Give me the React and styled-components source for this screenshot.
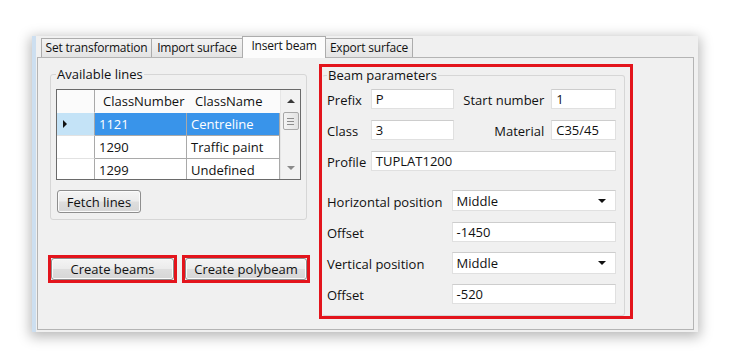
import styled, { createGlobalStyle } from "styled-components";

const GlobalStyle = createGlobalStyle`
  html, body { margin: 0; background: #ffffff; }
  body {
    font-family: "Open Sans", "Liberation Sans", sans-serif;
    font-size: 13px;
    color: #111111;
  }
`;

const Page = styled.div`
  width: 730px;
  height: 360px;
  box-sizing: border-box;
  padding: 36px 0 0 32px;
`;

const Window = styled.div`
  width: 666px;
  height: 296px;
  box-sizing: border-box;
  display: flex;
  flex-direction: column;
  padding: 0 4px 2px 1px;
  background: #f0f0f0;
  border-left: 4px solid #cddff0;
  box-shadow: 0 3px 12px 2px rgba(0, 0, 0, 0.28);
`;

const TabStrip = styled.div`
  height: 22px;
  margin-bottom: -1px;
  padding-left: 5px;
  display: flex;
  align-items: flex-end;
`;

const Tab = styled.div`
  position: relative;
  z-index: ${(p) => (p.$active ? 2 : 1)};
  box-sizing: border-box;
  width: ${(p) => p.$w}px;
  height: ${(p) => (p.$active ? 22 : 19)}px;
  margin-bottom: ${(p) => (p.$active ? 0 : 1)}px;
  margin-left: -1px;
  border: 1px solid #acacac;
  border-bottom: none;
  background: ${(p) =>
    p.$active ? "#fcfcfc" : "linear-gradient(#f3f3f3, #e4e4e4)"};
  font-size: 12px;
  line-height: ${(p) => (p.$active ? 18 : 17)}px;
  text-align: center;
  white-space: nowrap;
  letter-spacing: -0.2px;
`;

const TabPage = styled.div`
  flex: 1;
  display: flex;
  gap: 9px;
  padding: 6px 0 0 10px;
  border: 1px solid #b4b4b4;
  background: #f0f0f0;
`;

const LeftCol = styled.div`
  width: 262px;
  display: flex;
  flex-direction: column;
`;

const GroupBox = styled.fieldset`
  box-sizing: border-box;
  margin: 0;
  min-width: 0;
  border: 1px solid #d6d6d6;
  border-radius: 3px;
  padding: ${(p) => p.$pad};
`;

const Legend = styled.legend`
  padding: 0 1px;
  line-height: 15px;
`;

const LinesGroup = styled(GroupBox)`
  width: 257px;
  height: 153px;
  margin: 3px 0 0 2px;
`;

const DataGrid = styled.div`
  width: 245px;
  height: 91px;
  box-sizing: border-box;
  display: flex;
  overflow: hidden;
  border: 1px solid #6a6a6a;
  background: #ffffff;
`;

const Table = styled.div`
  display: grid;
  grid-template-columns: 38px 92px 93px;
  grid-auto-rows: 23px;
  align-content: start;
`;

const Cell = styled.div`
  box-sizing: border-box;
  padding-left: ${(p) => (p.$head ? 8 : 4)}px;
  line-height: 22px;
  white-space: nowrap;
  border-bottom: 1px solid ${(p) => (p.$head ? "transparent" : "#a9a9a9")};
  border-right: 1px solid ${(p) => (p.$head ? "transparent" : "#a9a9a9")};
  background: ${(p) => (p.$sel ? "#3994ea" : p.$head ? "#fbfbfb" : "#ffffff")};
  color: ${(p) => (p.$sel ? "#ffffff" : "#111111")};
`;

const RowHead = styled.div`
  box-sizing: border-box;
  display: flex;
  align-items: center;
  padding-left: 6px;
  border-right: 1px solid #a9a9a9;
  border-bottom: 1px solid ${(p) => (p.$head ? "transparent" : "#e2e2e2")};
  background: ${(p) => (p.$sel ? "#c4e3f7" : p.$head ? "#fbfbfb" : "#ffffff")};
`;

const Pointer = styled.span`
  width: 0;
  height: 0;
  border-top: 4px solid transparent;
  border-bottom: 4px solid transparent;
  border-left: 4px solid #111111;
`;

const ScrollBar = styled.div`
  width: 20px;
  display: flex;
  flex-direction: column;
  align-items: center;
  background: #f2f2f2;
  border-left: 1px solid #e6e6e6;
`;

const ScrollButton = styled.div`
  height: 22px;
  display: flex;
  align-items: center;
  justify-content: center;
`;

const Arrow = styled.span`
  width: 0;
  height: 0;
  border-left: 4px solid transparent;
  border-right: 4px solid transparent;
  ${(p) =>
    p.$down
      ? "border-top: 4px solid #8a8a8a;"
      : "border-bottom: 4px solid #3a3a3a;"}
`;

const Thumb = styled.div`
  width: 16px;
  height: 18px;
  box-sizing: border-box;
  display: flex;
  flex-direction: column;
  align-items: center;
  justify-content: center;
  gap: 2px;
  border: 1px solid #a8a8a8;
  border-radius: 2px;
  background: linear-gradient(90deg, #f4f4f4, #e2e2e2);
`;

const Grip = styled.span`
  width: 7px;
  height: 1px;
  background: #8c8c8c;
`;

const Track = styled.div`
  flex: 1;
`;

const Button = styled.button`
  box-sizing: border-box;
  width: ${(p) => (p.$w ? `${p.$w}px` : "100%")};
  height: ${(p) => p.$h || 22}px;
  padding: 0;
  font: inherit;
  color: #111111;
  border: 1px solid #8e8e8e;
  border-radius: 3px;
  background: linear-gradient(#f4f4f4 0%, #ececec 48%, #dedede 52%, #d6d6d6 100%);
  box-shadow: inset 0 0 0 1px #fbfbfb;
`;

const FetchButton = styled(Button)`
  margin: 10px 0 0 1px;
`;

const ButtonRow = styled.div`
  display: flex;
  gap: 5px;
  margin-top: 35px;
`;

const RedFrame = styled.div`
  box-sizing: border-box;
  width: ${(p) => p.$w}px;
  height: 28px;
  border: 3px solid #e3141c;
`;

const RedBox = styled.div`
  box-sizing: border-box;
  width: 314px;
  height: 255px;
  display: flex;
  padding: 0 5px 0 0;
  border: 3px solid #e3141c;
`;

const BeamGroup = styled(GroupBox)`
  flex: 1;
  margin: 1px 0 0;
  border-left-color: transparent;
`;

const FormRow = styled.div`
  height: 21px;
  display: flex;
  align-items: center;
  margin-top: ${(p) => p.$gap ?? 10}px;
`;

const Label = styled.div`
  box-sizing: border-box;
  width: ${(p) => p.$w}px;
  padding-right: ${(p) => (p.$right ? 7 : 0)}px;
  text-align: ${(p) => (p.$right ? "right" : "left")};
  white-space: nowrap;
  line-height: 21px;
  padding-top: 3px;
`;

const Field = styled.div`
  box-sizing: border-box;
  width: ${(p) => p.$w}px;
  height: ${(p) => p.$h || 20}px;
  display: flex;
  align-items: center;
  justify-content: space-between;
  padding: 0 9px 0 4px;
  background: #ffffff;
  border: 1px solid #e0e0e0;
  border-top-color: #cdcdcd;
  white-space: nowrap;
`;

const DropArrow = styled.span`
  width: 0;
  height: 0;
  border-left: 4px solid transparent;
  border-right: 4px solid transparent;
  border-top: 4px solid #111111;
`;

const rows = [
  { num: "1121", name: "Centreline", sel: true },
  { num: "1290", name: "Traffic paint" },
  { num: "1299", name: "Undefined" },
];

const tabs = [
  { label: "Set transformation", w: 111 },
  { label: "Import surface", w: 92 },
  { label: "Insert beam", w: 84, active: true },
  { label: "Export surface", w: 88 },
];

export default function App() {
  return (
    <Page>
      <GlobalStyle />
      <Window>
        <TabStrip>
          {tabs.map((t) => (
            <Tab key={t.label} $w={t.w} $active={t.active}>
              {t.label}
            </Tab>
          ))}
        </TabStrip>
        <TabPage>
          <LeftCol>
            <LinesGroup $pad="7px 5px 0 5px">
              <Legend>Available lines</Legend>
              <DataGrid>
                <Table>
                  <RowHead $head />
                  <Cell $head>ClassNumber</Cell>
                  <Cell $head>ClassName</Cell>
                  {rows.map((r) => [
                    <RowHead key={r.num + "h"} $sel={r.sel}>
                      {r.sel && <Pointer />}
                    </RowHead>,
                    <Cell key={r.num + "n"} $sel={r.sel}>
                      {r.num}
                    </Cell>,
                    <Cell key={r.num + "c"} $sel={r.sel}>
                      {r.name}
                    </Cell>,
                  ])}
                </Table>
                <ScrollBar>
                  <ScrollButton>
                    <Arrow />
                  </ScrollButton>
                  <Thumb>
                    <Grip />
                    <Grip />
                    <Grip />
                  </Thumb>
                  <Track />
                  <ScrollButton>
                    <Arrow $down />
                  </ScrollButton>
                </ScrollBar>
              </DataGrid>
              <FetchButton $w={84} $h={23}>
                Fetch lines
              </FetchButton>
            </LinesGroup>
            <ButtonRow>
              <RedFrame $w={129}>
                <Button>Create beams</Button>
              </RedFrame>
              <RedFrame $w={128}>
                <Button>Create polybeam</Button>
              </RedFrame>
            </ButtonRow>
          </LeftCol>
          <RedBox>
            <BeamGroup $pad="5px 8px 0 4px">
              <Legend>Beam parameters</Legend>
              <FormRow $gap={0}>
                <Label $w={44}>Prefix</Label>
                <Field $w={83}>P</Field>
                <Label $w={98} $right>
                  Start number
                </Label>
                <Field $w={65}>1</Field>
              </FormRow>
              <FormRow>
                <Label $w={44}>Class</Label>
                <Field $w={83}>3</Field>
                <Label $w={98} $right>
                  Material
                </Label>
                <Field $w={65}>C35/45</Field>
              </FormRow>
              <FormRow>
                <Label $w={44}>Profile</Label>
                <Field $w={246}>TUPLAT1200</Field>
              </FormRow>
              <FormRow $gap={19}>
                <Label $w={125}>Horizontal position</Label>
                <Field $w={165} $h={21}>
                  Middle
                  <DropArrow />
                </Field>
              </FormRow>
              <FormRow>
                <Label $w={125}>Offset</Label>
                <Field $w={165}>-1450</Field>
              </FormRow>
              <FormRow>
                <Label $w={125}>Vertical position</Label>
                <Field $w={165} $h={22}>
                  Middle
                  <DropArrow />
                </Field>
              </FormRow>
              <FormRow>
                <Label $w={125}>Offset</Label>
                <Field $w={165}>-520</Field>
              </FormRow>
            </BeamGroup>
          </RedBox>
        </TabPage>
      </Window>
    </Page>
  );
}
